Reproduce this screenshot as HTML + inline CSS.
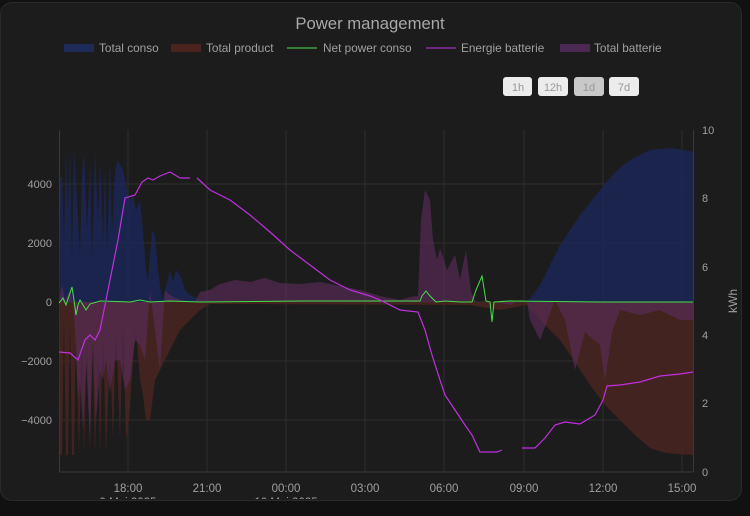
<!DOCTYPE html>
<html><head><meta charset="utf-8"><style>
html,body{margin:0;padding:0;background:#111;}
body{width:750px;height:516px;overflow:hidden;font-family:"Liberation Sans",sans-serif;}
.card{position:absolute;left:0;top:2px;width:740px;height:497px;background:#1c1c1c;border:1px solid #2a2a2a;border-radius:12px;overflow:hidden;}
svg{position:absolute;left:0;top:0;}
</style></head><body>
<div class="card"></div>
<svg width="750" height="516" viewBox="0 0 750 516" font-family="Liberation Sans, sans-serif">
<defs><clipPath id="c"><rect x="0" y="0" width="740" height="499"/></clipPath></defs>
<text x="370" y="29" fill="#a8a8a8" font-size="16.7" text-anchor="middle">Power management</text>
<g font-size="11.8" fill="#a0a0a0">
<rect x="64" y="44" width="30" height="8" fill="#1e2a5a"/><text x="99" y="52">Total conso</text>
<rect x="171" y="44" width="30" height="8" fill="#4a2520"/><text x="206" y="52">Total product</text>
<line x1="287" y1="48" x2="317" y2="48" stroke="#50e050"/><text x="323" y="52">Net power conso</text>
<line x1="426" y1="48" x2="456" y2="48" stroke="#c030e0"/><text x="461" y="52">Energie batterie</text>
<rect x="560" y="44" width="30" height="8" fill="#4a2a52"/><text x="594" y="52">Total batterie</text>
</g>
<g font-size="11" text-anchor="middle">
<rect x="503" y="77" width="29" height="19" rx="3" fill="#ececec"/><text x="518" y="91" fill="#999">1h</text>
<rect x="538" y="77" width="30" height="19" rx="3" fill="#ececec"/><text x="553" y="91" fill="#999">12h</text>
<rect x="574" y="77" width="30" height="19" rx="3" fill="#c8c8c8"/><text x="589" y="91" fill="#999">1d</text>
<rect x="609" y="77" width="30" height="19" rx="3" fill="#ececec"/><text x="624" y="91" fill="#999">7d</text>
</g>
<g stroke="#2e2e2e" stroke-width="1">
<line x1="59" y1="184" x2="693" y2="184"/><line x1="59" y1="243" x2="693" y2="243"/><line x1="59" y1="302" x2="693" y2="302"/><line x1="59" y1="361" x2="693" y2="361"/><line x1="59" y1="420" x2="693" y2="420"/>
<line x1="128" y1="130" x2="128" y2="472"/><line x1="207" y1="130" x2="207" y2="472"/><line x1="286" y1="130" x2="286" y2="472"/><line x1="365" y1="130" x2="365" y2="472"/><line x1="444" y1="130" x2="444" y2="472"/><line x1="524" y1="130" x2="524" y2="472"/><line x1="603" y1="130" x2="603" y2="472"/><line x1="682" y1="130" x2="682" y2="472"/>
</g>
<line x1="59.5" y1="130" x2="59.5" y2="472" stroke="#3a3a3a"/>
<line x1="59" y1="472" x2="693" y2="472" stroke="#3a3a3a"/>
<line x1="693.5" y1="130" x2="693.5" y2="472" stroke="#3a3a3a"/>
<polygon fill="#1a2655" fill-opacity="0.85" points="59,302 60,180 62,175 64,240 66,150 68,210 70,148 72,260 74,148 77,200 80,255 82,175 84,150 87,230 90,158 92,260 95,150 98,220 100,160 103,240 105,165 107,250 110,158 112,230 115,170 118,160 120,165 123,170 125,180 127,190 130,200 133,195 136,210 140,200 143,230 146,270 148,280 152,230 155,235 158,270 162,300 165,290 170,270 173,282 176,270 180,275 185,290 190,295 200,300 215,302 527,302 540,285 560,245 580,215 600,190 615,172 630,160 650,150 670,148 685,150 693,152 693,302"/>
<polygon fill="#4a2520" fill-opacity="0.85" points="59,302 60,455 62,455 64,320 66,455 68,455 70,320 72,455 74,455 76,330 79,455 82,330 84,455 87,340 90,455 92,330 95,455 98,340 100,455 103,330 106,455 110,350 113,440 116,330 120,440 123,320 126,440 129,420 133,360 136,330 140,380 143,395 146,420 150,420 155,380 160,370 165,360 170,350 175,340 180,330 190,320 200,310 210,304 470,305 500,310 527,305 545,325 560,340 575,362 590,385 605,405 620,420 635,435 650,448 665,453 693,455 693,302"/>
<polygon fill="#5a2d5a" fill-opacity="0.65" points="59,302 62,285 65,300 70,290 73,302 75,330 78,400 80,380 83,430 86,360 90,440 93,340 96,420 100,370 103,380 106,360 110,392 115,360 120,360 125,390 130,380 135,340 140,345 145,360 150,290 155,330 160,370 165,290 170,295 180,300 195,302 200,292 210,290 220,284 235,280 250,282 265,278 280,283 300,284 320,282 340,286 360,290 380,296 400,300 410,297 418,296 421,220 425,190 430,200 433,240 437,260 440,248 447,270 455,255 460,280 466,250 471,292 476,302 495,302 510,305 520,300 527,302 530,320 540,340 555,300 565,320 575,370 585,332 600,345 605,380 612,332 620,310 640,315 660,310 680,320 693,320 693,302"/>
<polyline fill="none" stroke="#44e044" stroke-width="1" points="59,303 63,298 66,305 70,293 72,287 74,300 76,315 78,305 80,300 86,310 90,304 100,301 130,302 140,300 150,302 170,301 200,302 300,301 420,301 422,296 426,291 430,296 436,302 445,301 460,302 472,302 476,290 482,276 486,301 490,302 492,322 494,302 510,301 600,302 693,302"/>
<polyline fill="none" stroke="#c030e0" stroke-width="1.2" points="59,352 70,353 78,360 85,340 90,335 95,340 100,330 110,280 118,240 125,198 135,195 142,182 148,178 153,180 160,176 170,172 180,178 190,178"/>
<polyline fill="none" stroke="#c030e0" stroke-width="1.2" points="197,178 210,190 230,200 250,215 270,232 290,250 310,265 330,280 350,290 370,296 380,300 400,310 418,312 425,330 432,355 440,380 445,395 455,410 465,425 472,435 480,452 490,452 497,452 502,450"/>
<polyline fill="none" stroke="#c030e0" stroke-width="1.2" points="522,448 535,448 545,438 555,425 565,422 580,424 595,415 603,400 607,386 620,385 640,382 660,376 680,374 693,372"/>
<g font-size="11" fill="#a0a0a0" text-anchor="end">
<text x="52" y="188">4000</text><text x="52" y="247">2000</text><text x="52" y="306">0</text><text x="52" y="365">−2000</text><text x="52" y="424">−4000</text>
</g>
<g font-size="11" fill="#a0a0a0">
<text x="702" y="134">10</text><text x="702" y="202">8</text><text x="702" y="271">6</text><text x="702" y="339">4</text><text x="702" y="407">2</text><text x="702" y="476">0</text>
<text x="737" y="301" transform="rotate(-90 737 301)" text-anchor="middle" font-size="12">kWh</text>
</g>
<g font-size="11.5" fill="#a0a0a0" text-anchor="middle">
<text x="128" y="492">18:00</text><text x="207" y="492">21:00</text><text x="286" y="492">00:00</text><text x="365" y="492">03:00</text><text x="444" y="492">06:00</text><text x="524" y="492">09:00</text><text x="603" y="492">12:00</text><text x="682" y="492">15:00</text>
<g clip-path="url(#c)"><text x="128" y="506">9 Mai 2025</text><text x="286" y="506">10 Mai 2025</text></g>
</g>
</svg>
</body></html>
